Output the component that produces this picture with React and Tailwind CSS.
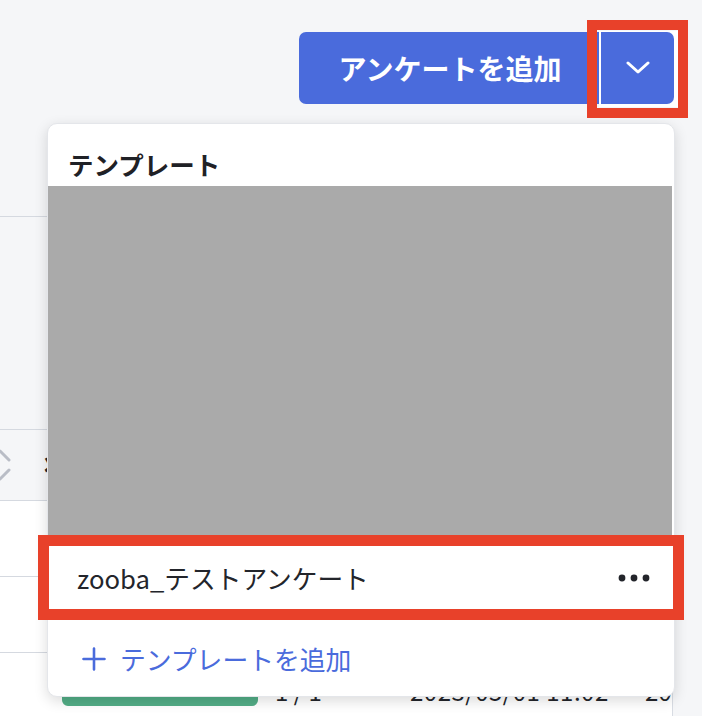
import React from "react";

function ChevronDown() {
  return (
    <svg width="24" height="14" viewBox="0 0 24 14" fill="none">
      <path d="M2 2 L12 11 L22 2" stroke="white" strokeWidth="3" strokeLinecap="round" strokeLinejoin="round" />
    </svg>
  );
}

function SortIcon() {
  return (
    <svg width="22" height="36" viewBox="0 0 22 36" fill="none">
      <path d="M2 13 L11 4 L20 13" stroke="#b9bdc6" strokeWidth="3" strokeLinecap="round" strokeLinejoin="round" />
      <path d="M2 23 L11 32 L20 23" stroke="#b9bdc6" strokeWidth="3" strokeLinecap="round" strokeLinejoin="round" />
    </svg>
  );
}

function Dots() {
  return (
    <svg width="32" height="8" viewBox="0 0 32 8">
      <circle cx="4" cy="4" r="3.4" fill="#23252b" />
      <circle cx="16" cy="4" r="3.4" fill="#23252b" />
      <circle cx="28" cy="4" r="3.4" fill="#23252b" />
    </svg>
  );
}

function Plus() {
  return (
    <svg width="24" height="24" viewBox="0 0 24 24" fill="none">
      <path d="M12 1.5 V22.5 M1.5 12 H22.5" stroke="#4a6bdc" strokeWidth="2.6" strokeLinecap="round" />
    </svg>
  );
}

export default function App() {
  return (
    <div className="relative w-[702px] h-[716px] overflow-hidden bg-[#f5f6f8] font-['Noto_Sans_CJK_JP',sans-serif] text-[#23252b]">
      {/* Top action bar */}
      <div className="flex justify-end pt-[32px] pr-[24px]">
        <div className="flex items-start">
          <button className="h-[72px] w-[300px] bg-[#4a6bdc] rounded-l-[7px] text-white text-[28px] font-bold leading-none flex items-center justify-center pl-[2px]">
            アンケートを追加
          </button>
          <div className="bg-white -mt-px pt-px pb-[3px] pl-[2px] pr-[4px]">
            <button className="h-[72px] w-[73px] bg-[#4a6bdc] rounded-r-[7px] flex items-center justify-center">
              <ChevronDown />
            </button>
          </div>
        </div>
      </div>

      {/* Table behind */}
      <div className="mt-[109px] w-[673px] border-r border-[#d8dce3] overflow-hidden">
        <div className="h-[213px] border-t border-[#d5d9e0]" />
        <div className="h-[71px] border-t border-[#d5d9e0] flex items-center">
          <div className="-ml-[11px] w-[22px] shrink-0 flex items-center">
            <SortIcon />
          </div>
          <span className="ml-[33px] text-[24px] font-bold leading-none">状態</span>
        </div>
        <div className="bg-white">
          <div className="h-[76px] border-t border-[#d5d9e0]" />
          <div className="h-[76px] border-t border-[#d5d9e0]" />
          <div className="h-[76px] border-t border-[#d5d9e0] flex items-center text-[24px] leading-none whitespace-nowrap overflow-hidden">
            <div className="ml-[62px] w-[196px] h-[30px] shrink-0 rounded-[6px] bg-[#52ad86]" />
            <span className="ml-[17px] w-[135px] shrink-0">1 / 1</span>
            <span className="w-[235px] shrink-0 tracking-[0.5px]">2023/05/01 11:02</span>
            <span className="shrink-0">2023</span>
          </div>
        </div>
      </div>

      {/* Dropdown popup */}
      <div className="absolute left-[47px] top-[123px] w-[628px] h-[574px] bg-white rounded-[10px] border border-[#e4e6ea] shadow-[0_4px_14px_rgba(0,0,0,0.14)] overflow-hidden flex flex-col">
        <div className="pl-[20px] pt-[27px] pb-[10px] text-[25.5px] leading-[25px] font-bold text-[#1f2126]">
          テンプレート
        </div>
        <div className="h-[352px] mr-[2px] shrink-0 bg-[#aaaaaa]" />
        <div className="h-[80px] shrink-0 flex items-center justify-between pl-[29px] pr-[24px]">
          <span className="text-[25.7px] leading-none text-[#23252b]">zooba_テストアンケート</span>
          <Dots />
        </div>
        <div className="h-[79px] shrink-0 flex items-center pl-[34px] pt-[2px] text-[#4a6bdc]">
          <Plus />
          <span className="ml-[14px] text-[25.8px] leading-none">テンプレートを追加</span>
        </div>
      </div>

      {/* Annotation boxes */}
      <div className="absolute left-[587px] top-[20px] w-[101px] h-[98px] border-[10px] border-[#e8412a]" />
      <div className="absolute left-[38px] top-[535px] w-[646px] h-[85px] border-[11px] border-[#e8412a]" />
    </div>
  );
}
